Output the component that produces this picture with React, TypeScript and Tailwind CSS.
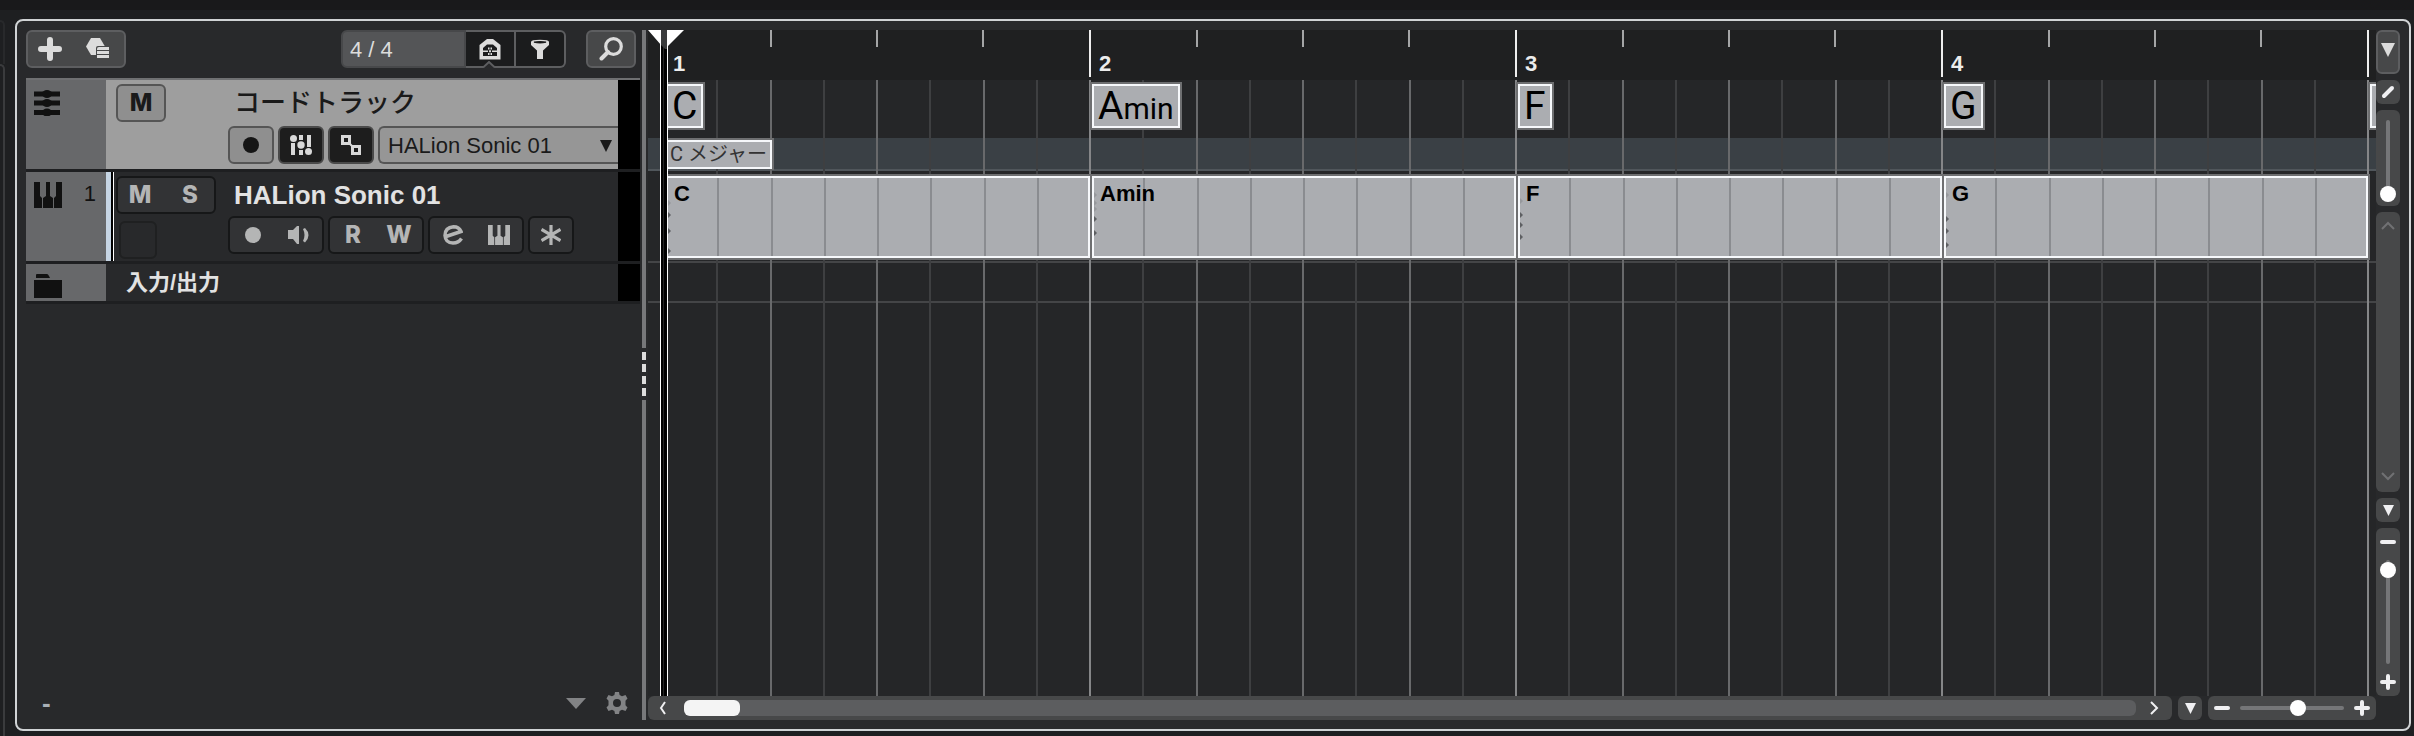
import { useState } from "react"
import type { ReactNode } from "react"

const BARS = [1, 2, 3, 4]
const EIGHTHS = [0, 1, 2, 3, 4, 5, 6, 7]

const CHORDS = [
  { root: "C", type: "" },
  { root: "A", type: "min" },
  { root: "F", type: "" },
  { root: "G", type: "" },
]

// y offsets of the notes inside each part, "soft" notes have a low velocity
const PARTS = [
  { name: "C", soft: [25], notes: [37, 53, 73] },
  { name: "Amin", soft: [17, 25, 31], notes: [41, 55] },
  { name: "F", soft: [23], notes: [37, 47, 59] },
  { name: "G", soft: [17], notes: [41, 53, 67] },
]

function PlusIcon({ size = 16, stroke = 4 }: { size?: number; stroke?: number }) {
  const s = stroke / 2
  return (
    <svg width={size} height={size} viewBox={`0 0 ${size} ${size}`} stroke="currentColor" strokeWidth={stroke} strokeLinecap="round">
      <path d={`M${size / 2} ${s}V${size - s}M${s} ${size / 2}H${size - s}`} />
    </svg>
  )
}

function MinusIcon() {
  return (
    <svg width="16" height="16" viewBox="0 0 16 16" stroke="currentColor" strokeWidth="4" strokeLinecap="round">
      <path d="M2 8H14" />
    </svg>
  )
}

function TriangleDown({ width, height }: { width: number; height: number }) {
  return (
    <svg width={width} height={height} viewBox="0 0 12 12" preserveAspectRatio="none" fill="currentColor">
      <path d="M0 0H12L6 12Z" />
    </svg>
  )
}

function PresetIcon() {
  return (
    <svg width="24" height="22" viewBox="0 0 24 22">
      <path d="M5 0H14L19 8.500L14 17H5L0 8.500Z" fill="currentColor" />
      <path d="M10 22V10Q10 8 12 8H24V22Z" fill="#474849" />
      <path d="M11 12V11Q11 9 13 9H23V12ZM11 13H23V16H11ZM11 17H23V20H11Z" fill="currentColor" />
    </svg>
  )
}

function HouseIcon() {
  return (
    <svg width="22" height="21" viewBox="0 0 22 21">
      <path d="M8 0H14L21.500 6V20.500H.5V6Z" fill="currentColor" />
      <path d="M8 5.500H14L18 9V17H4V9Z" fill="#1b1c1d" />
      <path d="M4 11.500H9V13H4ZM13 11.500H18V13H13ZM9 8.500H10.500V10.500H9ZM11.500 8.500H13V10.500H11.500ZM9 14H10.500V16H9ZM11.500 14H13V16H11.500ZM10 11.300H12V13.300H10Z" fill="currentColor" />
    </svg>
  )
}

function FunnelIcon() {
  return (
    <svg width="20" height="21" viewBox="0 0 20 21">
      <path d="M1 3Q1 .8 10 .8T19 3V6L13 11.500V20H7V11.500L1 6Z" fill="currentColor" />
      <path d="M4 3.200Q10 1.800 16 3.200Q10 4.600 4 3.200Z" stroke="#1b1c1d" strokeWidth="1.200" />
    </svg>
  )
}

function SearchIcon() {
  return (
    <svg width="24" height="24" viewBox="0 0 24 24" fill="none" stroke="currentColor">
      <circle cx="14.500" cy="9.500" r="7.800" strokeWidth="3.200" />
      <path d="M9 15L2.500 21.500" strokeWidth="4" strokeLinecap="round" />
    </svg>
  )
}

function ChordTrackIcon() {
  return (
    <svg width="26" height="26" viewBox="0 0 26 26" fill="#111">
      <path d="M0 1.500H26V6.500H0ZM0 10.500H26V15.500H0ZM0 20H26V25H0Z" />
      <ellipse cx="13" cy="4" rx="5" ry="4" />
      <ellipse cx="13" cy="13" rx="5" ry="4" />
      <ellipse cx="13" cy="22.500" rx="5" ry="4" />
    </svg>
  )
}

function KeysIcon({ width, height }: { width: number; height: number }) {
  return (
    <svg width={width} height={height} viewBox="0 0 28 26" preserveAspectRatio="none" fill="currentColor">
      <path d="M0 0H6V14L8 16V26H0ZM12 0H16V14L19 16V26H9V16L12 14ZM22 0H28V26H20V16L22 14Z" />
    </svg>
  )
}

function FolderIcon() {
  return (
    <svg width="28" height="24" viewBox="0 0 28 24" fill="#111">
      <path d="M2 4V1Q2 0 3 0H13Q14 0 15 2L16 4ZM0 6H28V24H0Z" />
    </svg>
  )
}

function MixerIcon() {
  return (
    <svg width="22" height="21" viewBox="0 0 22 21" fill="currentColor">
      <path d="M1 8H5V20H1ZM9 0H13V5H9ZM9 15H13V20H9ZM17 0H21V12H17Z" />
      <circle cx="3.500" cy="3.500" r="3.500" />
      <circle cx="11" cy="10" r="3.700" />
      <circle cx="18.500" cy="16.500" r="3.500" />
    </svg>
  )
}

function LinkedSquaresIcon() {
  return (
    <svg width="20" height="20" viewBox="0 0 20 20" fill="none" stroke="currentColor" strokeWidth="3">
      <path d="M1.500 1.500H8.500V8.500H1.500ZM11.500 11.500H18.500V18.500H11.500Z" />
      <path d="M9 9L11 11" strokeWidth="2" />
    </svg>
  )
}

function SpeakerIcon() {
  return (
    <svg width="22" height="20" viewBox="0 0 22 20" fill="currentColor">
      <path d="M0 5H5L9 1H11V19H9L5 14H0Z" />
      <path d="M15 4Q18 10 15 16L17 17.500Q24 10 17 3Z" />
    </svg>
  )
}

function EditIcon() {
  return (
    <svg width="20" height="20" viewBox="0 0 20 20" fill="none" stroke="currentColor" strokeWidth="3.500">
      <path d="M3 11.500L18 6.500Q16 1.800 10.500 1.800Q2 2.500 2 10.500Q2.500 18 10 18Q15.500 18 18.500 13.500" />
    </svg>
  )
}

function FreezeIcon() {
  return (
    <svg width="20" height="20" viewBox="0 0 20 20" fill="none" stroke="currentColor" strokeWidth="3.200">
      <path d="M10 0V20M.5 4.500L19.500 15.500M19.500 4.500L.5 15.500" />
    </svg>
  )
}

function GearIcon() {
  return (
    <svg width="22" height="22" viewBox="0 0 22 22" fill="currentColor" fillRule="evenodd">
      <path d="M9 0H13L13.600 3L16 4.300L19.500 3L21.500 6.500L19.500 8.800V13.200L21.500 15.500L19.500 19L16 17.700L13.600 19L13 22H9L8.400 19L6 17.700L2.500 19L.5 15.500L2.500 13.200V8.800L.5 6.500L2.500 3L6 4.300L8.400 3ZM11 7A4 4 0 1 0 11 15A4 4 0 1 0 11 7Z" />
    </svg>
  )
}

function Chevron({ d, className }: { d: string; className: string }) {
  return (
    <svg width="16" height="16" viewBox="0 0 16 16" fill="none" stroke="currentColor" strokeWidth="2" className={className}>
      <path d={d} />
    </svg>
  )
}

function DarkGroup({ children }: { children: ReactNode }) {
  return (
    <div className="flex h-[38px] w-fit rounded-md border-2 border-[#161718] bg-[#323335] font-[Inter,sans-serif] text-[24px] leading-none font-extrabold text-[#b4b5b5]">
      {children}
    </div>
  )
}

function GroupButton({ label, children }: { label: string; children: ReactNode }) {
  return (
    <button type="button" aria-label={label} className="flex h-full w-[46px] items-center justify-center">
      {children}
    </button>
  )
}

function Toolbar() {
  return (
    <div className="flex h-[38px] pr-1.5 text-[#dcdcdc]">
      <div className="flex w-[100px] rounded-md border-2 border-[#5d5e60] bg-[#474849]">
        <button type="button" aria-label="Add track" className="flex w-11 items-center justify-center">
          <PlusIcon size={24} stroke={6} />
        </button>
        <button type="button" aria-label="Add track from preset" className="flex flex-1 items-center justify-center">
          <PresetIcon />
        </button>
      </div>

      <div className="ml-auto flex">
        <input
          aria-label="Track count"
          readOnly
          value="4 / 4"
          className="w-[125px] rounded-l-md border-2 border-[#47484a] bg-[#545557] pl-[7px] text-[22px] text-[#dcdcdc] outline-none"
        />
        <button
          type="button"
          aria-label="Track visibility"
          className="relative flex w-[50px] items-center justify-center border-y-2 border-r-2 border-[#5d5e60] bg-[#1b1c1d]"
        >
          <HouseIcon />
          <svg width="12" height="7" viewBox="0 0 12 7" className="absolute -bottom-0.5 left-[17px]">
            <path d="M0 7L6 0L12 7Z" fill="#28292b" />
            <path d="M0 6.500L6 1L12 6.500" fill="none" stroke="#5d5e60" strokeWidth="2" />
          </svg>
        </button>
        <button
          type="button"
          aria-label="Filter track types"
          className="flex w-[50px] items-center justify-center rounded-r-md border-y-2 border-r-2 border-[#5d5e60] bg-[#1b1c1d]"
        >
          <FunnelIcon />
        </button>
      </div>

      <button
        type="button"
        aria-label="Find track"
        className="ml-5 flex w-[50px] items-center justify-center rounded-md border-2 border-[#5d5e60] bg-[#474849]"
      >
        <SearchIcon />
      </button>
    </div>
  )
}

function TrackList() {
  return (
    <div className="mt-2.5 mr-0.5 border-t-2 border-[#6f7072]">
      {/* chord track */}
      <div className="flex h-[92px] border-b-3 border-[#1e1f21]">
        <div className="w-20 bg-[#67686a] px-2 pt-2.5">
          <ChordTrackIcon />
        </div>
        <div className="flex min-w-0 flex-1 bg-[#9e9e9e] pt-1 pl-2.5 text-[#1a1a1a]">
          <div className="w-28">
            <button
              type="button"
              className="h-[38px] w-[50px] rounded-md border-2 border-[#555] bg-[#8f8f8f] font-[Inter,sans-serif] text-[24px] leading-none font-extrabold"
            >
              M
            </button>
          </div>
          <div className="min-w-0 flex-1">
            <div className="flex h-[38px] items-center pl-1.5 text-[26px] leading-none font-medium">コードトラック</div>
            <div className="mt-1 flex h-[38px] gap-1">
              <button
                type="button"
                aria-label="Record enable"
                className="flex w-[46px] items-center justify-center rounded-md border-2 border-[#555] bg-[#8f8f8f]"
              >
                <span className="h-4 w-4 rounded-full bg-[#151515]"></span>
              </button>
              <button
                type="button"
                aria-label="Voicings"
                className="flex w-[46px] items-center justify-center rounded-md border-2 border-[#4a4a4a] bg-[#1d1d1d] text-[#d8d8d8]"
              >
                <MixerIcon />
              </button>
              <button
                type="button"
                aria-label="Show scales"
                className="flex w-[46px] items-center justify-center rounded-md border-2 border-[#4a4a4a] bg-[#1d1d1d] text-[#d8d8d8]"
              >
                <LinkedSquaresIcon />
              </button>
              <div className="relative min-w-0 flex-1">
                <select
                  aria-label="Monitor track"
                  className="h-[38px] w-full appearance-none rounded-l-md border-2 border-r-0 border-[#555] bg-[#969696] pl-2 text-[22px] text-[#1a1a1a] outline-none"
                >
                  <option>HALion Sonic 01</option>
                </select>
                <span className="pointer-events-none absolute top-3.5 right-1.5">
                  <TriangleDown width={12} height={12} />
                </span>
              </div>
            </div>
          </div>
        </div>
        <div className="w-[22px] bg-black"></div>
      </div>

      {/* instrument track */}
      <div className="flex h-[92px] border-b-3 border-[#1e1f21]">
        <div className="flex w-20 justify-between bg-[#67686a] pt-2.5 pr-2.5 pl-2 text-[#111]">
          <KeysIcon width={28} height={26} />
          <span className="text-[22px] leading-6">1</span>
        </div>
        <div className="w-[5px] bg-[#c6d5e4]"></div>
        <div className="mr-0.5 w-[3px] border-r border-white bg-black"></div>
        <div className="flex min-w-0 flex-1 pt-1">
          <div className="w-28">
            <DarkGroup>
              <button type="button" className="w-11">M</button>
              <button type="button" className="ml-1 w-12">S</button>
            </DarkGroup>
            <button
              type="button"
              aria-label="Track colour"
              className="mt-[7px] ml-[3px] block h-[38px] w-[38px] rounded-md border-2 border-[#1f2021]"
            ></button>
          </div>
          <div className="min-w-0 flex-1">
            <div className="flex h-[38px] items-center pl-1.5 text-[26px] leading-none font-bold text-[#e2e2e2]">HALion Sonic 01</div>
            <div className="mt-0.5 flex gap-1">
              <DarkGroup>
                <GroupButton label="Record enable">
                  <span className="h-4 w-4 rounded-full bg-[#b4b5b5]"></span>
                </GroupButton>
                <GroupButton label="Monitor">
                  <SpeakerIcon />
                </GroupButton>
              </DarkGroup>
              <DarkGroup>
                <GroupButton label="Read automation">R</GroupButton>
                <GroupButton label="Write automation">W</GroupButton>
              </DarkGroup>
              <DarkGroup>
                <GroupButton label="Edit channel settings">
                  <EditIcon />
                </GroupButton>
                <GroupButton label="Edit instrument">
                  <KeysIcon width={22} height={20} />
                </GroupButton>
              </DarkGroup>
              <DarkGroup>
                <button type="button" aria-label="Freeze" className="flex w-[42px] items-center justify-center">
                  <FreezeIcon />
                </button>
              </DarkGroup>
            </div>
          </div>
        </div>
        <div className="w-[22px] bg-black"></div>
      </div>

      {/* input / output folder */}
      <div className="flex h-10 border-b-3 border-[#1e1f21]">
        <div className="w-20 bg-[#67686a] pt-2.5 pl-2">
          <FolderIcon />
        </div>
        <div className="flex flex-1 items-center pl-5 text-[22px] leading-none font-bold text-[#e2e2e2]">入力/出力</div>
        <div className="w-[22px] bg-black"></div>
      </div>
    </div>
  )
}

function Divider() {
  return (
    <div className="flex w-1 flex-col bg-[#28292b]">
      <div className="h-[318px] bg-[#77787a]"></div>
      <div className="flex flex-col gap-1 py-1">
        {[0, 1, 2, 3].map((i) => (
          <div key={i} className="h-2 bg-[#dcdcdc]"></div>
        ))}
      </div>
      <div className="flex-1 bg-[#77787a]"></div>
    </div>
  )
}

function Ruler() {
  return (
    <div className="flex h-[50px] bg-[#1f2021] pl-[15px] text-[22px] leading-none font-bold text-[#ececec]">
      {BARS.map((bar) => (
        <div key={bar} className="grid h-[47px] flex-1 grid-cols-4 border-l-2 border-[#eeeeee]">
          <div className="flex items-end pb-0.5 pl-2">
            <span>{bar}</span>
          </div>
          <div className="-ml-px h-[17px] border-l-2 border-[#a4a5a6]"></div>
          <div className="-ml-px h-[17px] border-l-2 border-[#a4a5a6]"></div>
          <div className="-ml-px h-[17px] border-l-2 border-[#a4a5a6]"></div>
        </div>
      ))}
      <div className="h-[47px] w-[9px] border-l-2 border-[#eeeeee]"></div>
    </div>
  )
}

function GridLines() {
  return (
    <div className="pointer-events-none absolute inset-0 flex pl-[15px]">
      {BARS.map((bar) => (
        <div key={bar} className="grid flex-1 grid-cols-8">
          {EIGHTHS.map((n) => (
            <div
              key={n}
              className={
                n === 0
                  ? "border-l-2 border-[#858688]"
                  : n % 2 === 0
                    ? "border-l-2 border-[#68696b]"
                    : "border-l-2 border-[#3e3f41]"
              }
            ></div>
          ))}
        </div>
      ))}
      <div className="w-[9px] border-l-2 border-[#858688]"></div>
    </div>
  )
}

function ChordLabel({ root, type }: { root: string; type: string }) {
  return (
    <div className="w-max border-2 border-[#6e6f71]">
      <div className="h-11 border-2 border-[#f6f8fb] bg-[#abadb1] px-1 font-[Roboto,sans-serif] text-[39px] leading-10 text-black">
        {root}
        <span className="text-[30px] leading-none">{type}</span>
      </div>
    </div>
  )
}

function Part({ name, soft, notes }: { name: string; soft: number[]; notes: number[] }) {
  return (
    <div className="relative border-2 border-[#f6f8fb] bg-[#abadb1] pt-1 pl-1.5 text-[22px] leading-6 font-bold text-black">
      <svg width="4" height="78" viewBox="0 0 4 78" className="absolute top-0 left-0">
        {soft.map((y) => (
          <path key={y} d={`M0 ${y - 3}L3 ${y}L0 ${y + 3}Z`} fill="#96989c" />
        ))}
        {notes.map((y) => (
          <path key={y} d={`M0 ${y - 3}L3 ${y}L0 ${y + 3}Z`} fill="#5d5f62" />
        ))}
      </svg>
      <span className="relative z-10">{name}</span>
    </div>
  )
}

function Playhead() {
  return (
    <>
      <div className="pointer-events-none absolute inset-y-0 left-3 flex w-2 border-x border-white bg-black">
        <div className="ml-0.5 w-px bg-[#262626]"></div>
      </div>
      <svg width="38" height="20" viewBox="0 0 38 20" className="pointer-events-none absolute top-0 left-0">
        <path d="M13 0H19V19H17L13 15Z" fill="#3a3b3c" />
        <path d="M0 0H13V15ZM19 0H36L19 17Z" fill="#fff" />
      </svg>
    </>
  )
}

function EventDisplay() {
  return (
    <div className="relative flex min-h-0 flex-1 flex-col overflow-hidden">
      <Ruler />
      <div className="relative flex-1 bg-[#252628]">
        <div className="h-[58px]"></div>
        <div className="h-[33px] border-b-2 border-[#50565b] bg-[#3a4045]"></div>
        <div className="h-[92px] border-b-2 border-[#444547]"></div>
        <div className="h-10 border-b-2 border-[#444547]"></div>
        <GridLines />

        <div className="absolute inset-x-0 top-0.5">
          <div className="flex pl-4">
            {CHORDS.map((chord, i) => (
              <div key={i} className="h-14 flex-1">
                <ChordLabel root={chord.root} type={chord.type} />
              </div>
            ))}
            {/* left edge of the label that starts in bar 5 */}
            <div className="h-12 w-2 border-2 border-r-0 border-[#6e6f71]">
              <div className="h-11 border-2 border-r-0 border-[#f6f8fb] bg-[#abadb1]"></div>
            </div>
          </div>
          <div className="ml-4 flex h-8 w-[110px] border-2 border-b-0 border-[#6e6f71]">
            <div className="h-[29px] w-full overflow-hidden border-2 border-[#f6f8fb] bg-[#abadb1] pl-0.5 font-[Roboto,'Noto_Sans_CJK_JP',sans-serif] text-[20px] leading-6 whitespace-nowrap text-[#333]">
              C メジャー
            </div>
          </div>
          <div className="relative mt-1 mr-1.5 ml-4 h-[86px] bg-[#6e6f71] p-0.5">
            <div className="grid h-full grid-cols-4 gap-0.5">
              {PARTS.map((part) => (
                <Part key={part.name} name={part.name} soft={part.soft} notes={part.notes} />
              ))}
            </div>
            <div className="pointer-events-none absolute inset-y-1 right-0.5 left-0 grid grid-cols-4">
              {BARS.map((bar) => (
                <div key={bar} className="grid grid-cols-8">
                  {EIGHTHS.map((n) => (
                    <div key={n} className={n === 0 ? "" : "border-l-2 border-[#8a8c90]"}></div>
                  ))}
                </div>
              ))}
            </div>
          </div>
        </div>
      </div>
      <Playhead />
    </div>
  )
}

function HorizontalBar() {
  const [zoom, setZoom] = useState(57)

  return (
    <div className="flex h-6 gap-1.5 text-[#f0f0f2]">
      <div className="flex min-w-0 flex-1 items-center rounded-md bg-[#474849]">
        <button type="button" aria-label="Scroll left" className="flex w-9 justify-center pr-1.5">
          <Chevron d="M10 2L6 8L10 14" className="block" />
        </button>
        <div className="h-4 flex-1 rounded-md bg-[#5c5d5f]">
          <div className="h-4 w-14 rounded-md bg-[#f4f4f4]"></div>
        </div>
        <button type="button" aria-label="Scroll right" className="flex w-9 justify-center">
          <Chevron d="M5 2L11 8L5 14" className="block" />
        </button>
      </div>
      <button type="button" aria-label="Horizontal zoom presets" className="flex w-6 items-center justify-center rounded-md bg-[#474849]">
        <TriangleDown width={11} height={11} />
      </button>
      <div className="flex w-[168px] items-center justify-between rounded-md bg-[#474849] px-1.5">
        <button type="button" aria-label="Zoom out" onClick={() => setZoom(Math.max(0, zoom - 5))}>
          <MinusIcon />
        </button>
        <input
          type="range"
          aria-label="Horizontal zoom"
          value={zoom}
          onChange={(e) => setZoom(Number(e.target.value))}
          className="h-1 w-[104px] appearance-none rounded-full bg-[#757678] [&::-webkit-slider-thumb]:h-4 [&::-webkit-slider-thumb]:w-4 [&::-webkit-slider-thumb]:appearance-none [&::-webkit-slider-thumb]:rounded-full [&::-webkit-slider-thumb]:bg-white"
        />
        <button type="button" aria-label="Zoom in" onClick={() => setZoom(Math.min(100, zoom + 5))}>
          <PlusIcon />
        </button>
      </div>
    </div>
  )
}

function VerticalBar() {
  const [zoom, setZoom] = useState(98)
  const [wave, setWave] = useState(0)

  return (
    <div className="mb-6 flex w-6 flex-col gap-1.5 text-[#f0f0f2]">
      <button
        type="button"
        aria-label="Ruler format"
        className="flex h-11 shrink-0 items-center justify-center rounded-md border-2 border-[#5d5e60] bg-[#474849] pb-1 text-[#dcdcdc]"
      >
        <TriangleDown width={14} height={14} />
      </button>
      <button type="button" aria-label="Divide track list" className="flex h-6 shrink-0 items-center justify-center rounded-md bg-[#474849]">
        <svg width="14" height="14" viewBox="0 0 14 14" stroke="currentColor" strokeWidth="4" strokeLinecap="round">
          <path d="M3 11L11 3" />
        </svg>
      </button>
      <div className="flex h-24 shrink-0 items-end justify-center rounded-md bg-[#474849] pb-1">
        <input
          type="range"
          aria-label="Waveform zoom"
          value={wave}
          onChange={(e) => setWave(Number(e.target.value))}
          className="h-[82px] w-1 appearance-none rounded-full bg-[#757678] [direction:rtl] [writing-mode:vertical-lr] [&::-webkit-slider-thumb]:h-4 [&::-webkit-slider-thumb]:w-4 [&::-webkit-slider-thumb]:appearance-none [&::-webkit-slider-thumb]:rounded-full [&::-webkit-slider-thumb]:bg-white"
        />
      </div>
      <div className="flex min-h-0 flex-1 flex-col items-center justify-between rounded-md bg-[#474849] py-1.5 text-[#707173]">
        <button type="button" aria-label="Scroll up">
          <Chevron d="M2 11L8 5L14 11" className="block" />
        </button>
        <button type="button" aria-label="Scroll down">
          <Chevron d="M2 3L8 9L14 3" className="block" />
        </button>
      </div>
      <button type="button" aria-label="Vertical zoom presets" className="flex h-6 shrink-0 items-center justify-center rounded-md bg-[#474849]">
        <TriangleDown width={11} height={11} />
      </button>
      <div className="flex h-[168px] shrink-0 flex-col items-center justify-between rounded-md bg-[#474849] py-1.5">
        <button type="button" aria-label="Zoom out vertically" onClick={() => setZoom(Math.min(100, zoom + 5))}>
          <MinusIcon />
        </button>
        <input
          type="range"
          aria-label="Vertical zoom"
          value={zoom}
          onChange={(e) => setZoom(Number(e.target.value))}
          className="h-[104px] w-1 appearance-none rounded-full bg-[#757678] [direction:rtl] [writing-mode:vertical-lr] [&::-webkit-slider-thumb]:h-4 [&::-webkit-slider-thumb]:w-4 [&::-webkit-slider-thumb]:appearance-none [&::-webkit-slider-thumb]:rounded-full [&::-webkit-slider-thumb]:bg-white"
        />
        <button type="button" aria-label="Zoom in vertically" onClick={() => setZoom(Math.max(0, zoom - 5))}>
          <PlusIcon />
        </button>
      </div>
    </div>
  )
}

export default function App() {
  return (
    <div className="flex h-screen flex-col overflow-hidden bg-[#1e1f21] font-['Liberation_Sans','Noto_Sans_CJK_JP',sans-serif]">
      <div className="h-2.5 shrink-0 bg-[#19191b]"></div>
      <div className="flex min-h-0 flex-1">
        {/* edge of the neighbouring inspector panel */}
        <div className="flex w-[15px] flex-col pt-2.5 pr-2.5">
          <div className="h-11 rounded-tr-md border-t-2 border-r-2 border-[#28292b]"></div>
          <div className="flex-1 rounded-tr-md border-t-2 border-r-2 border-[#3a3b3d]"></div>
        </div>

        <main className="mt-[9px] mr-[3px] mb-[5px] flex min-w-0 flex-1 rounded-lg border-2 border-[#d0d3d5] bg-[#28292b] p-[9px]">
          <section className="flex w-[616px] shrink-0 flex-col">
            <Toolbar />
            <TrackList />
            <div className="mt-auto flex items-center pr-3.5 pb-1 pl-4 text-[#828385]">
              <span className="text-[26px] leading-none font-bold text-[#a9b0b6]">-</span>
              <button type="button" aria-label="Track list menu" className="ml-auto">
                <TriangleDown width={20} height={11} />
              </button>
              <button type="button" aria-label="Track controls settings" className="ml-5">
                <GearIcon />
              </button>
            </div>
          </section>
          <Divider />
          <section className="ml-0.5 flex min-w-0 flex-1 flex-col">
            <EventDisplay />
            <HorizontalBar />
          </section>
          <VerticalBar />
        </main>
      </div>
    </div>
  )
}
